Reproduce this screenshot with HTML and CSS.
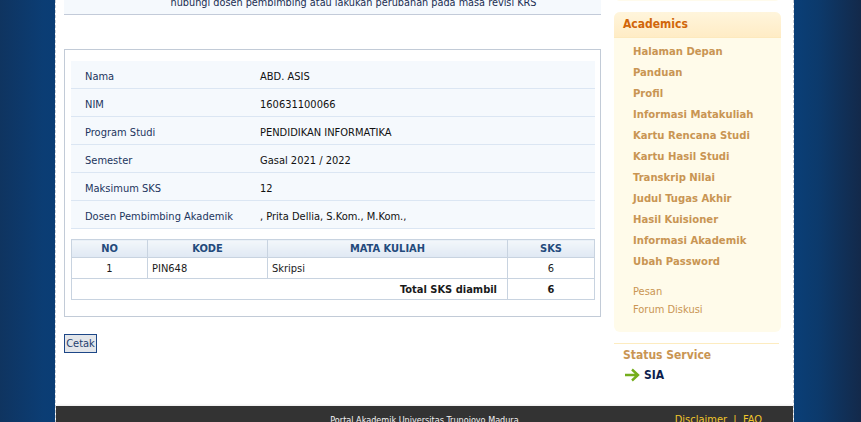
FILE: index.html
```html
<!DOCTYPE html>
<html>
<head>
<meta charset="utf-8">
<title>KRS</title>
<link rel="stylesheet" href="styles.css">
</head>
<body>
<div class="page">
  <div class="content">
    <div class="main">
      <div class="notice">hubungi dosen pembimbing atau lakukan perubahan pada masa revisi KRS</div>
      <div class="krs-box">
        <table class="info">
          <tr><td class="lbl">Nama</td><td>ABD. ASIS</td></tr>
          <tr><td class="lbl">NIM</td><td>160631100066</td></tr>
          <tr><td class="lbl">Program Studi</td><td>PENDIDIKAN INFORMATIKA</td></tr>
          <tr><td class="lbl">Semester</td><td>Gasal 2021 / 2022</td></tr>
          <tr><td class="lbl">Maksimum SKS</td><td>12</td></tr>
          <tr><td class="lbl">Dosen Pembimbing Akademik</td><td>, Prita Dellia, S.Kom., M.Kom.,</td></tr>
        </table>
        <table class="mk">
          <tr><th class="c-no">NO</th><th class="c-kode">KODE</th><th class="c-mk">MATA KULIAH</th><th class="c-sks">SKS</th></tr>
          <tr><td class="center">1</td><td>PIN648</td><td>Skripsi</td><td class="center">6</td></tr>
          <tr class="total"><td colspan="3" class="right">Total SKS diambil</td><td class="center">6</td></tr>
        </table>
      </div>
      <div class="actions"><button class="btn">Cetak</button></div>
    </div>
    <div class="sidebar">
      <div class="prev-box"></div>
      <div class="menu-box">
        <div class="menu-head">Academics</div>
        <ul class="menu">
          <li>Halaman Depan</li>
          <li>Panduan</li>
          <li>Profil</li>
          <li>Informasi Matakuliah</li>
          <li>Kartu Rencana Studi</li>
          <li>Kartu Hasil Studi</li>
          <li>Transkrip Nilai</li>
          <li>Judul Tugas Akhir</li>
          <li>Hasil Kuisioner</li>
          <li>Informasi Akademik</li>
          <li>Ubah Password</li>
        </ul>
        <ul class="menu2">
          <li>Pesan</li>
          <li>Forum Diskusi</li>
        </ul>
      </div>
      <div class="status">
        <div class="status-title">Status Service</div>
        <div class="status-item">
          <svg width="16" height="14" viewBox="0 0 16 14"><path d="M1 7 H14 M8 1.5 L14 7 L8 12.5" fill="none" stroke="#74ae1c" stroke-width="2.4" stroke-linecap="butt" stroke-linejoin="miter"/></svg>
          <span>SIA</span>
        </div>
      </div>
    </div>
  </div>
  <div class="footer">
    <span></span>
    <span class="foot-center">Portal Akademik Universitas Trunojoyo Madura</span>
    <span class="foot-right">Disclaimer &nbsp;|&nbsp; FAQ</span>
  </div>
</div>
</body>
</html>
```
FILE: styles.css
```css
html, body {
  margin: 0;
  padding: 0;
}
body {
  height: 422px;
  overflow: hidden;
  font-family: "DejaVu Sans", "Liberation Sans", sans-serif;
  font-stretch: condensed;
  font-size: 11px;
  color: #111;
  background: linear-gradient(90deg, #0f3460 0%, #0b3d74 5%, #0a3d75 6.4%, #0a3f78 92%, #0c3a6c 95%, #13294a 100%);
}
.page {
  margin-top: -30px;
  margin-left: 55px;
  width: 737px;
  background: #fff;
  border-left: 1px dashed #c9ced6;
  border-right: 1px dashed #c9ced6;
}
.content {
  display: flex;
  gap: 13px;
  padding: 0 12px 0 8px;
}
.main {
  width: 537px;
  flex: none;
}
.notice {
  padding: 26px 0 5px 42px;
  line-height: 13px;
  font-size: 10.8px;
  text-align: center;
  color: #1a2d52;
  background: #f5f9fd;
  border-bottom: 1px solid #c3cbd9;
}
.krs-box {
  margin-top: 34px;
  border: 1px solid #c2cbd7;
  padding: 11px 5px 16px 6px;
}
table {
  border-collapse: collapse;
  width: 100%;
}
.info td {
  height: 24px;
  padding: 3px 0 0;
  background: #f5f9fd;
  border-bottom: 1px solid #dbe6f3;
  color: #111;
}
.info td.lbl {
  width: 175px;
  padding-left: 14px;
  color: #1c355e;
}
.mk {
  margin-top: 10px;
  border: 1px solid #c8d3e0;
}
.mk th {
  height: 17px;
  padding: 0;
  font-weight: bold;
  color: #234a7c;
  background: linear-gradient(#f3f7fb, #dfe8f3);
  border: 1px solid #c8d3e0;
  text-align: center;
}
.mk td {
  height: 20px;
  padding: 0 4px;
  border: 1px solid #c8d3e0;
  color: #1a1a1a;
}
.c-no { width: 75px; }
.c-kode { width: 119px; }
.c-mk { width: 239px; }
.mk .center { text-align: center; }
.mk .right { text-align: right; padding-right: 10px; }
.mk .total td { font-weight: bold; }
.actions {
  margin-top: 17px;
}
.btn {
  font-family: inherit;
  font-stretch: condensed;
  font-size: 11px;
  color: #23406e;
  background: #e3e6ea;
  border: 1px solid #1d4787;
  padding: 0 1px;
  height: 19px;
  width: 33px;
  border-radius: 0;
}
.sidebar {
  width: 167px;
  flex: none;
}
.prev-box {
  height: 31px;
  background: #fffbec;
  border-radius: 0 0 6px 6px;
}
.menu-box {
  margin-top: 11px;
  background: #fffbea;
  border-radius: 6px;
  padding-bottom: 13px;
}
.menu-head {
  height: 25px;
  line-height: 24px;
  padding-left: 9px;
  font-size: 12px;
  font-weight: bold;
  color: #d1660a;
  background: linear-gradient(#fff5dc, #ffecc5);
  border-radius: 6px 6px 0 0;
  border-bottom: 1px solid #fde9bd;
}
.menu, .menu2 {
  list-style: none;
  margin: 0;
  padding: 3px 0 0 19px;
}
.menu li {
  line-height: 21px;
  font-size: 11.2px;
  font-weight: bold;
  color: #c99553;
}
.menu2 {
  padding-top: 11px;
}
.menu2 li {
  line-height: 18px;
  color: #c99553;
}
.status {
  margin-top: 11px;
  border-top: 1px solid #fdecc0;
  padding: 3px 0 0 9px;
  width: 156px;
}
.status-title {
  font-size: 12px;
  font-weight: bold;
  line-height: 17px;
  color: #c99553;
}
.status-item {
  display: flex;
  align-items: center;
  gap: 4px;
  height: 22px;
  padding-left: 1px;
}
.status-item span {
  font-size: 12px;
  font-weight: bold;
  color: #0d1f4d;
}
.footer {
  margin-top: 20px;
  height: 40px;
  background: #333;
  box-shadow: 0 -1px 2px rgba(0,0,0,0.08);
  display: grid;
  grid-template-columns: 1fr auto 1fr;
  align-items: baseline;
  padding-top: 7px;
  font-size: 11px;
  line-height: 14px;
}
.foot-center {
  font-size: 9px;
  color: #f4f4f4;
}
.foot-right {
  justify-self: end;
  padding-right: 31px;
  color: #f0c52c;
}
```
